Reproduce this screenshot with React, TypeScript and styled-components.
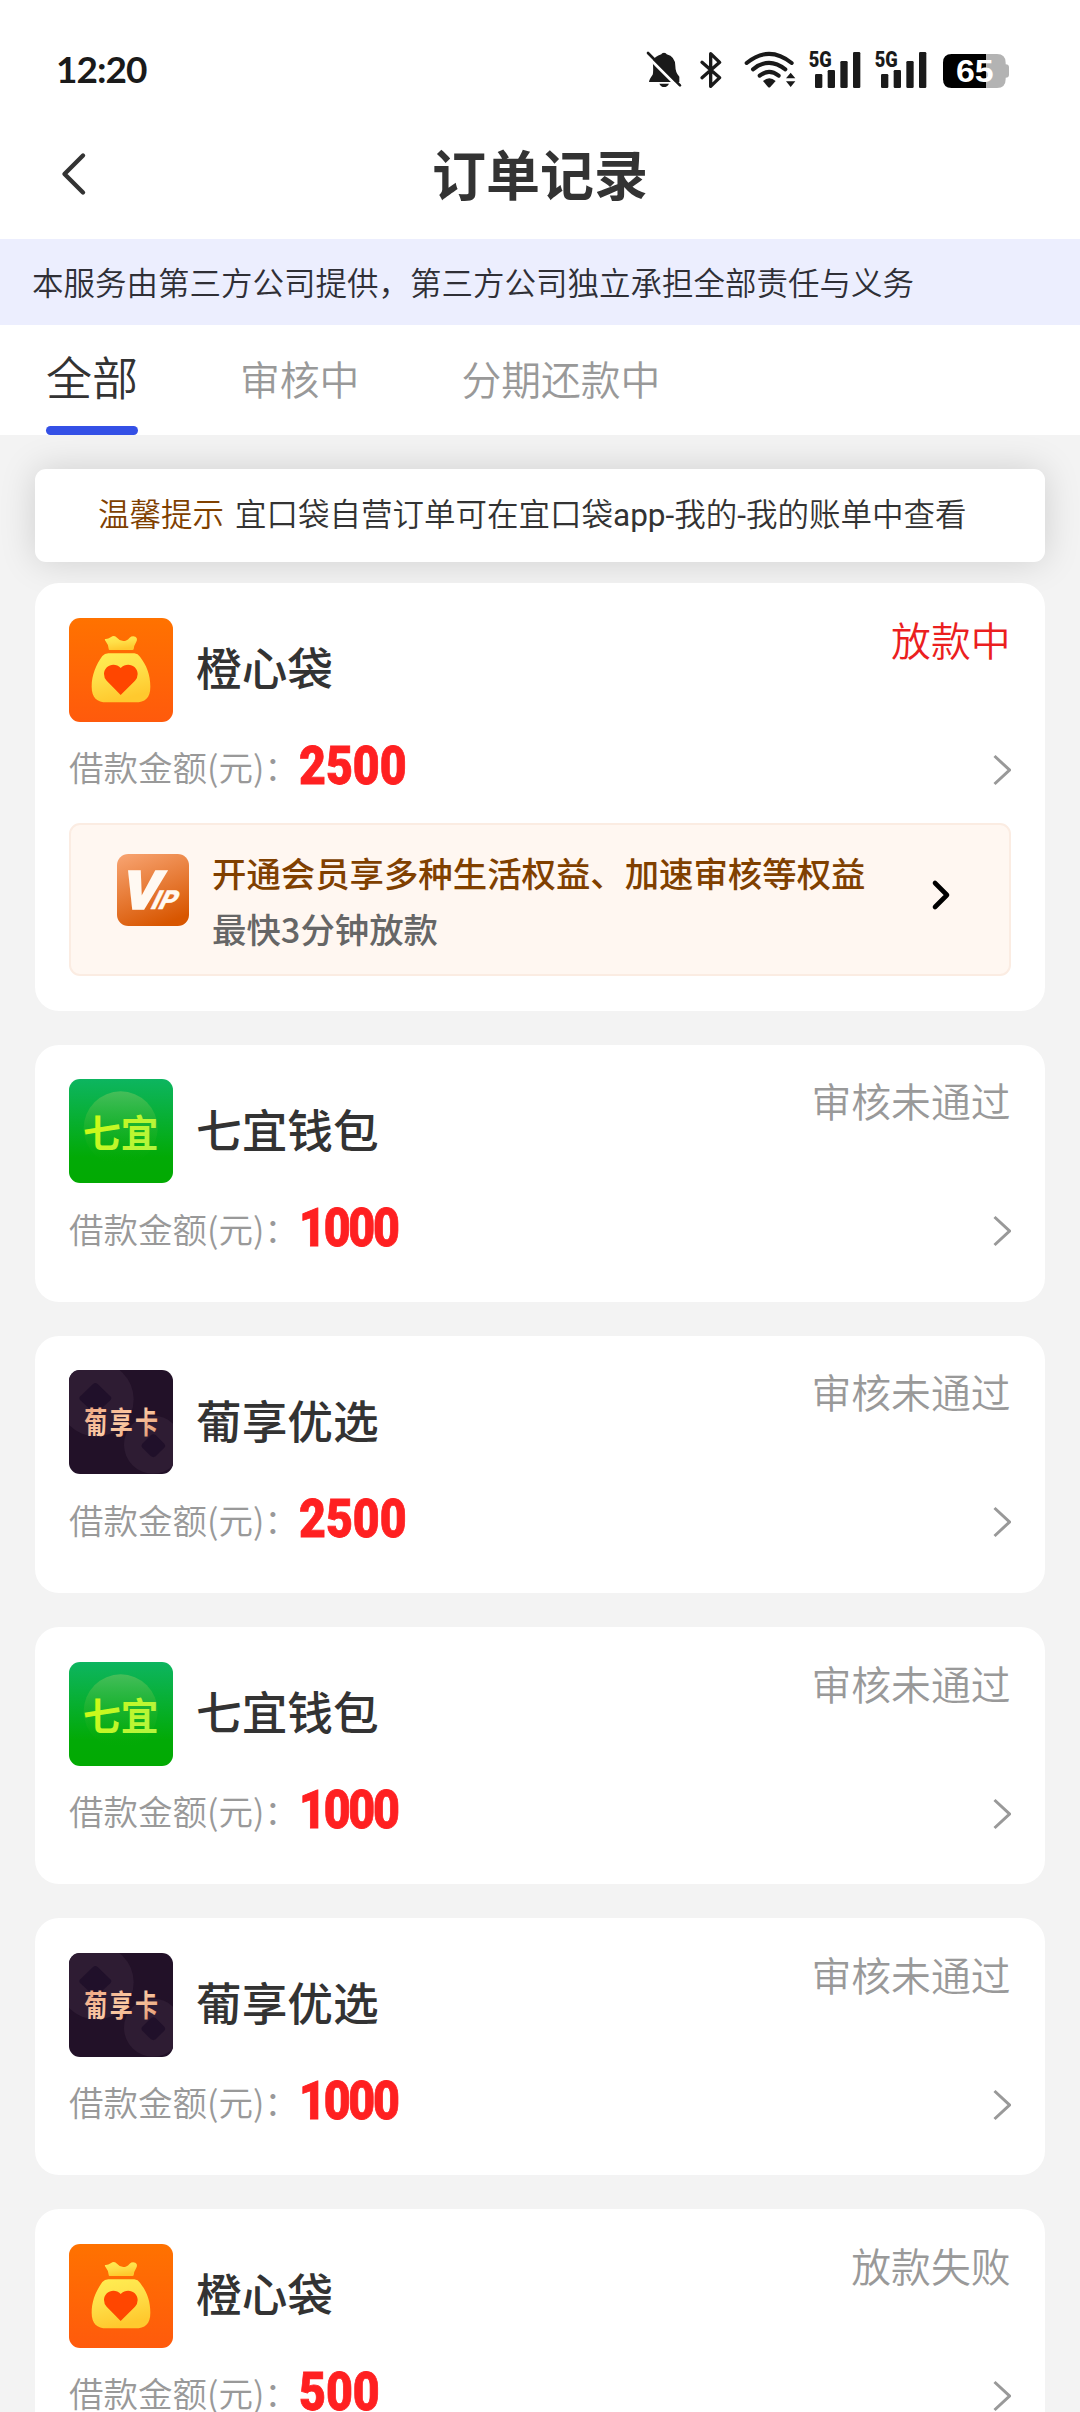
import React from "react";
import styled, { createGlobalStyle } from "styled-components";

const GlobalStyle = createGlobalStyle`
  * { box-sizing: border-box; }
  body {
    margin: 0;
    background: #f3f3f3;
    font-family: "Noto Sans CJK SC", sans-serif;
    font-weight: 350;
    color: #333;
  }
`;

const Screen = styled.main`
  width: 1080px;
  height: 2412px;
  overflow: hidden;
  background: #f3f3f3;
  display: flex;
  flex-direction: column;
`;

const StatusBar = styled.div`
  flex: none;
  height: 112px;
  background: #fff;
  display: flex;
  justify-content: space-between;
  padding: 0 71px 0 56px;
`;

const Clock = styled.span`
  font: 700 37px/44px Lato, sans-serif;
  letter-spacing: -1px;
  color: #1a1a1a;
  margin-top: 47px;
`;

const StatusIcons = styled.div`
  display: flex;
  align-items: flex-start;
  padding-top: 50px;
  svg { display: block; overflow: visible; }
`;

const Gap = styled.span<{ $w: number }>`
  width: ${(p) => p.$w}px;
`;

const TitleBar = styled.header`
  flex: none;
  height: 127px;
  padding-bottom: 4px;
  background: #fff;
  display: grid;
  grid-template-columns: 150px 1fr 150px;
  align-items: center;
  svg { display: block; margin-left: 60px; }
`;

const Title = styled.h1`
  margin: 0 0 2px;
  text-align: center;
  font-size: 54px;
  line-height: 80px;
  font-weight: 700;
`;

const Banner = styled.div`
  flex: none;
  height: 86px;
  padding: 0 32px;
  background: #eceefe;
  color: #2f2f36;
  font-size: 31.5px;
  line-height: 84px;
`;

const Tabs = styled.nav`
  flex: none;
  height: 110px;
  padding-left: 46px;
  background: #fff;
  display: flex;
  gap: 102px;
`;

const Tab = styled.a<{ $active?: boolean }>`
  height: 110px;
  line-height: ${(p) => (p.$active ? 101 : 106)}px;
  font-size: ${(p) => (p.$active ? 46 : 39.8)}px;
  color: ${(p) => (p.$active ? "#333" : "#999")};
  display: flex;
  flex-direction: column;
  justify-content: space-between;
  span { height: 101px; }
`;

const TabLine = styled.i`
  height: 9px;
  border-radius: 5px;
  background: #3450e6;
`;

const Content = styled.section`
  flex: none;
  padding: 34px 35px 0;
  display: flex;
  flex-direction: column;
`;

const Notice = styled.div`
  height: 93px;
  margin-bottom: 21px;
  border-radius: 11px;
  background: #fff;
  box-shadow: 0 0 36px rgba(0, 0, 0, 0.15);
  display: flex;
  gap: 11px;
  padding-left: 63px;
  font-size: 31.5px;
  line-height: 87px;
  white-space: nowrap;
`;

const NoticeLabel = styled.span`
  color: #804000;
`;

const Latin = styled.span`
  font-family: Roboto, sans-serif;
  font-weight: 400;
  font-size: 31.5px;
`;

const CardList = styled.div`
  display: flex;
  flex-direction: column;
  gap: 34px;
`;

const Card = styled.article`
  border-radius: 24px;
  background: #fff;
  padding: 34.8px 34.5px 34.3px 34px;
`;

const CardHead = styled.div`
  height: 104px;
  display: flex;
  align-items: center;
  svg { display: block; border-radius: 11px; flex: none; }
`;

const Name = styled.h2`
  margin: 0 0 7px 23px;
  font-size: 45.7px;
  line-height: 64px;
  font-weight: 500;
  flex: 1;
`;

const Status = styled.span<{ $hot?: boolean }>`
  align-self: flex-start;
  font-size: 39.8px;
  line-height: 42px;
  color: ${(p) => (p.$hot ? "#eb1f1f" : "#999")};
`;

const AmountRow = styled.div`
  height: 84px;
  padding-top: 12px;
  display: flex;
  align-items: center;
  justify-content: space-between;
`;

const AmountGroup = styled.div`
  display: flex;
  align-items: center;
  padding-bottom: 7px;
`;

const Label = styled.span`
  font-size: 34.5px;
  line-height: 50px;
  color: #999;
  width: 230px;
  white-space: nowrap;
`;

const Amount = styled.strong<{ $tight: boolean }>`
  font: 900 54px/54px Roboto, sans-serif;
  letter-spacing: ${(p) => (p.$tight ? -2.6 : 0)}px;
  color: #ff2021;
  -webkit-text-stroke: 0.8px #ff2021;
  transform: scaleX(0.86);
  transform-origin: left center;
`;

const VipBox = styled.div`
  height: 153px;
  margin-top: 17.5px;
  border: 2px solid #fbece2;
  border-radius: 11px;
  background: #fff7f1;
  display: flex;
  padding: 29px 58px 0 46px;
  > svg { flex: none; }
  > svg:last-child { margin-top: 25px; }
`;

const VipText = styled.div`
  flex: 1;
  margin-left: 23px;
  margin-top: -10px;
  font-size: 34.4px;
  line-height: 56px;
  font-weight: 500;
  color: #666;
`;

const VipTitle = styled.div`
  color: #804000;
`;

const MutedBell = () => (
  <svg width="36" height="38" viewBox="138 60 108 114">
    <path d="M158 92 Q164 80 184 73 Q185 68 192 68 Q199 68 200 73 Q226 80 226 108 Q226 128 238 140 V156 H147 Q147 149 158 134 Q161 124 158 92Z" fill="#1a1a1a" />
    <path d="M178 161 H207 Q202 171 192 171 Q183 171 178 161Z" fill="#1a1a1a" />
    <path d="M135 72 L236 173" stroke="#fff" strokeWidth="9" />
    <path d="M144 69 L240 166" stroke="#1a1a1a" strokeWidth="8" strokeLinecap="round" />
  </svg>
);

const Bluetooth = () => (
  <svg width="22" height="38" viewBox="301 60 66 114">
    <path d="M307 97 L360 143 L333 169 V71 L360 97 L307 143" fill="none" stroke="#1a1a1a" strokeWidth="10" strokeLinejoin="round" strokeLinecap="round" />
  </svg>
);

const Wifi = () => (
  <svg width="52" height="38" viewBox="431 60 156 114">
    <g fill="none" stroke="#1a1a1a" strokeWidth="12" strokeLinecap="round">
      <path d="M439 99 Q506 44 574 99" />
      <path d="M458 118 Q506 79 555 118" />
      <path d="M478 137 Q506 114 535 137" />
    </g>
    <path d="M488 153 Q507 137 526 153 L510 171 Q507 174 503 171Z" fill="#1a1a1a" />
    <path d="M557 145 L571 128 L585 145Z M557 154 H585 L571 171Z" fill="#1a1a1a" />
  </svg>
);

const Signal = () => (
  <svg width="52" height="38" viewBox="627 60 156 114">
    <text x="626" y="110" fontFamily="Roboto, sans-serif" fontWeight="900" fontSize="65" textLength="69" lengthAdjust="spacingAndGlyphs" fill="#1a1a1a">5G</text>
    <g fill="#1a1a1a">
      <rect x="645" y="132" width="22" height="42" rx="4" />
      <rect x="683" y="120" width="22" height="54" rx="4" />
      <rect x="721" y="93" width="22" height="81" rx="4" />
      <rect x="759" y="66" width="22" height="108" rx="4" />
    </g>
  </svg>
);

const Battery = () => (
  <svg width="66" height="38" viewBox="1029 60 198 114">
    <path d="M1158 72 H1191 Q1217 72 1217 98 V103 Q1227 103 1227 112 V134 Q1227 143 1217 143 V148 Q1217 174 1191 174 H1158Z" fill="#b3b3b3" />
    <path d="M1158 72 H1055 Q1029 72 1029 98 V148 Q1029 174 1055 174 H1158Z" fill="#000" />
    <text x="1068" y="157" fontFamily="'Liberation Sans', sans-serif" fontWeight="700" fontSize="94" textLength="113" lengthAdjust="spacingAndGlyphs" fill="#fff">65</text>
  </svg>
);

const Chevron = () => (
  <svg width="20" height="32" viewBox="0 0 20 32">
    <path d="M3.5 2 L18.5 16 L3.5 30" fill="none" stroke="#999" strokeWidth="3" />
  </svg>
);

const BagLogo = () => (
  <svg width="104" height="104" viewBox="0 0 312 312">
    <defs>
      <linearGradient id="orange" x1="0" y1="0" x2="0" y2="1">
        <stop offset="0" stopColor="#ff7200" />
        <stop offset="1" stopColor="#ff5a0c" />
      </linearGradient>
      <linearGradient id="gold" x1="0" y1="0" x2="0.3" y2="1">
        <stop offset="0" stopColor="#ffee52" />
        <stop offset="0.5" stopColor="#ffdf48" />
        <stop offset="1" stopColor="#ffc92e" />
      </linearGradient>
    </defs>
    <rect width="312" height="312" fill="url(#orange)" />
    <path d="M108 63 Q117 64 125 58 Q136 50 144 59 Q156 73 170 68 Q178 65 182 59 Q189 53 199 56 Q207 61 202 71 Q195 82 194 94 Q193 96 190 96 H122 Q119 96 119 92 Q118 80 110 70 Q106 65 108 63Z" fill="url(#gold)" />
    <path d="M118 106 H196 Q207 107 213 116 C232 141 244 168 244 206 C244 240 228 253 199 253 H113 C84 253 68 239 68 206 C68 170 82 139 100 114 Q107 107 118 106Z" fill="url(#gold)" />
    <path d="M155 231 L113 188 Q105 180 105 168 C105 142 137 130 155 150 C174 130 206 142 206 168 Q206 180 198 188Z" fill="#ff4600" />
  </svg>
);

const QiyiLogo = () => (
  <svg width="104" height="104" viewBox="0 0 312 312">
    <defs>
      <linearGradient id="green" x1="0" y1="0" x2="0" y2="1">
        <stop offset="0" stopColor="#0db560" />
        <stop offset="0.75" stopColor="#02aa06" />
        <stop offset="1" stopColor="#02aa02" />
      </linearGradient>
      <linearGradient id="disc" x1="0" y1="0" x2="0" y2="1">
        <stop offset="0" stopColor="#45be5a" />
        <stop offset="0.75" stopColor="#18b018" stopOpacity="0.3" />
        <stop offset="1" stopColor="#02aa02" stopOpacity="0" />
      </linearGradient>
      <linearGradient id="lime" x1="0" y1="0" x2="1" y2="0.5">
        <stop offset="0" stopColor="#d4fb0c" />
        <stop offset="1" stopColor="#b4f53c" />
      </linearGradient>
    </defs>
    <rect width="312" height="312" fill="url(#green)" />
    <circle cx="155" cy="148" r="111" fill="url(#disc)" />
    <text x="42" y="203" fontFamily="'Noto Sans CJK SC', sans-serif" fontWeight="700" fontSize="113" fill="url(#lime)">七宜</text>
  </svg>
);

const PuxiangLogo = () => (
  <svg width="104" height="104" viewBox="0 0 312 312">
    <defs>
      <linearGradient id="peach" x1="0" y1="0" x2="1" y2="1">
        <stop offset="0" stopColor="#ea9c78" />
        <stop offset="0.5" stopColor="#fccba5" />
        <stop offset="1" stopColor="#dd9068" />
      </linearGradient>
    </defs>
    <rect width="312" height="312" fill="#221128" />
    <circle cx="82" cy="88" r="112" fill="#2e1c33" />
    <path d="M72 42 Q79 36 86 42 L124 79 Q130 85 124 91 L86 126 Q79 132 72 126 L34 91 Q28 85 34 79Z" fill="#20102a" />
    <circle cx="252" cy="224" r="87" fill="#2e1c33" />
    <path d="M246 195 Q253 190 260 195 L286 221 Q291 227 286 233 L260 259 Q253 264 246 259 L220 233 Q215 227 220 221Z" fill="#20102a" />
    <g transform="translate(46 190) scale(1 1.28)">
      <text fontFamily="'Noto Sans CJK SC', sans-serif" fontWeight="700" fontSize="69" letterSpacing="7" fill="url(#peach)">葡享卡</text>
    </g>
  </svg>
);

const VipIcon = () => (
  <svg width="72" height="72" viewBox="0 0 216 216">
    <defs>
      <linearGradient id="vip" x1="0.2" y1="0" x2="0.6" y2="1">
        <stop offset="0" stopColor="#f6a06c" />
        <stop offset="1" stopColor="#d85600" />
      </linearGradient>
    </defs>
    <rect width="216" height="216" rx="34" fill="url(#vip)" />
    <g fill="#fff9f2" stroke="#fff9f2" fontFamily="Roboto, sans-serif" fontWeight="900">
      <text transform="translate(8 165) skewX(-14)" fontSize="160" textLength="112" lengthAdjust="spacingAndGlyphs" strokeWidth="5">V</text>
      <text transform="translate(96 165) skewX(-26)" fontSize="78" textLength="74" lengthAdjust="spacingAndGlyphs" strokeWidth="1">IP</text>
    </g>
  </svg>
);

const logos = { bag: BagLogo, qiyi: QiyiLogo, puxiang: PuxiangLogo };

interface Order {
  logo: keyof typeof logos;
  name: string;
  status: string;
  amount: string;
  lending?: boolean;
}

const orders: Order[] = [
  { logo: "bag", name: "橙心袋", status: "放款中", amount: "2500", lending: true },
  { logo: "qiyi", name: "七宜钱包", status: "审核未通过", amount: "1000" },
  { logo: "puxiang", name: "葡享优选", status: "审核未通过", amount: "2500" },
  { logo: "qiyi", name: "七宜钱包", status: "审核未通过", amount: "1000" },
  { logo: "puxiang", name: "葡享优选", status: "审核未通过", amount: "1000" },
  { logo: "bag", name: "橙心袋", status: "放款失败", amount: "500" },
];

const OrderCard = ({ order }: { order: Order }) => {
  const Logo = logos[order.logo];
  return (
    <Card>
      <CardHead>
        <Logo />
        <Name>{order.name}</Name>
        <Status $hot={order.lending}>{order.status}</Status>
      </CardHead>
      <AmountRow>
        <AmountGroup>
          <Label>借款金额(元)：</Label>
          <Amount $tight={order.amount.startsWith("1")}>{order.amount}</Amount>
        </AmountGroup>
        <Chevron />
      </AmountRow>
      {order.lending && (
        <VipBox>
          <VipIcon />
          <VipText>
            <VipTitle>开通会员享多种生活权益、加速审核等权益</VipTitle>
            <div>最快3分钟放款</div>
          </VipText>
          <svg width="20" height="32" viewBox="0 0 20 32">
            <path d="M4 4 L16 16 L4 28" fill="none" stroke="#000" strokeWidth="4.6" strokeLinecap="round" strokeLinejoin="round" />
          </svg>
        </VipBox>
      )}
    </Card>
  );
};

export default function App() {
  return (
    <Screen>
      <GlobalStyle />
      <StatusBar>
        <Clock>12:20</Clock>
        <StatusIcons>
          <MutedBell /><Gap $w={18} />
          <Bluetooth /><Gap $w={21.5} />
          <Wifi /><Gap $w={13.5} />
          <Signal /><Gap $w={14} />
          <Signal /><Gap $w={16} />
          <Battery />
        </StatusIcons>
      </StatusBar>
      <TitleBar>
        <svg width="28" height="46" viewBox="0 0 28 46">
          <path d="M23 4.5 L4.5 23 L23 41.5" fill="none" stroke="#333" strokeWidth="4.4" strokeLinecap="round" strokeLinejoin="round" />
        </svg>
        <Title>订单记录</Title>
      </TitleBar>
      <Banner>本服务由第三方公司提供，第三方公司独立承担全部责任与义务</Banner>
      <Tabs>
        <Tab $active><span>全部</span><TabLine /></Tab>
        <Tab><span>审核中</span></Tab>
        <Tab><span>分期还款中</span></Tab>
      </Tabs>
      <Content>
        <Notice>
          <NoticeLabel>温馨提示</NoticeLabel>
          <span>宜口袋自营订单可在宜口袋<Latin>app-</Latin>我的<Latin>-</Latin>我的账单中查看</span>
        </Notice>
        <CardList>
          {orders.map((order, i) => <OrderCard key={i} order={order} />)}
        </CardList>
      </Content>
    </Screen>
  );
}
